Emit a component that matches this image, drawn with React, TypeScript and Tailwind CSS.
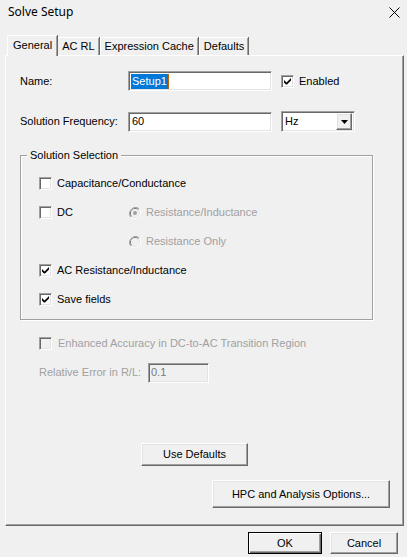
import React from "react";

const sunken =
  "border border-t-[#a0a0a0] border-l-[#a0a0a0] border-b-white border-r-white shadow-[inset_1px_1px_0_#696969,inset_-1px_-1px_0_#e3e3e3]";
const raised =
  "border border-t-white border-l-white border-b-[#696969] border-r-[#696969] shadow-[inset_-1px_-1px_0_#a0a0a0,inset_1px_1px_0_#e3e3e3]";

function Check({ checked, disabled }: { checked?: boolean; disabled?: boolean }) {
  return (
    <div
      className={`w-[13px] h-[13px] shrink-0 flex items-center justify-center ${sunken} ${
        disabled ? "bg-[#f0f0f0]" : "bg-white"
      }`}
    >
      {checked && (
        <svg width="7" height="7" viewBox="0 0 7 7">
          <path d="M0 2 L0 4.5 L2 6.5 L3 6.5 L7 2.5 L7 0 L2.5 4.5 Z" fill={disabled ? "#a0a0a0" : "#000"} />
        </svg>
      )}
    </div>
  );
}

function Radio({ on }: { on?: boolean }) {
  return (
    <svg width="12" height="12" viewBox="0 0 12 12" className="shrink-0">
      <path d="M10.2 1.8 A6 6 0 0 0 1.8 10.2" stroke="#a0a0a0" strokeWidth="1" fill="none" />
      <path d="M1.8 10.2 A6 6 0 0 0 10.2 1.8" stroke="#ffffff" strokeWidth="1" fill="none" />
      <path d="M9.5 2.5 A5 5 0 0 0 2.5 9.5" stroke="#696969" strokeWidth="1" fill="none" />
      <path d="M2.5 9.5 A5 5 0 0 0 9.5 2.5" stroke="#e3e3e3" strokeWidth="1" fill="none" />
      <circle cx="6" cy="6" r="4" fill="#f0f0f0" />
      {on && <circle cx="6" cy="6" r="2" fill="#a0a0a0" />}
    </svg>
  );
}

function Tab({ label, selected }: { label: string; selected?: boolean }) {
  return (
    <div
      className={`flex items-center bg-[#f0f0f0] border-t border-l border-t-white border-l-white shadow-[inset_-1px_0_0_#a0a0a0,1px_0_0_#696969] ${
        selected ? "h-[21px] px-[5px] relative z-10 -mb-px" : "h-[18px] px-[4px] mr-px"
      }`}
    >
      <span className={selected ? "-mt-[2px]" : ""}>{label}</span>
    </div>
  );
}

export default function App() {
  return (
    <div
      className="w-[407px] h-[557px] bg-[#f0f0f0] text-black text-[11px] leading-[13px] flex flex-col overflow-hidden whitespace-nowrap"
      style={{ fontFamily: '"Liberation Sans", Arial, sans-serif' }}
    >
      {/* Title bar */}
      <div className="h-[30px] flex items-start justify-between pl-[8px] pr-[6px] pt-[4px]">
        <span className="text-[12px] leading-[16px]" style={{ fontFamily: '"Noto Sans", sans-serif' }}>
          Solve Setup
        </span>
        <svg width="11" height="11" viewBox="0 0 11 11" className="mt-[3px] mr-[1px]">
          <path d="M0.5 0.5 L10.5 10.5 M10.5 0.5 L0.5 10.5" stroke="#000" strokeWidth="1" />
        </svg>
      </div>

      {/* Tabs */}
      <div className="mt-[4px] pl-[7px] flex items-end h-[21px]">
        <Tab label="General" selected />
        <Tab label="AC RL" />
        <Tab label="Expression Cache" />
        <Tab label="Defaults" />
      </div>

      {/* Panel */}
      <div className="ml-[5px] w-[399px] h-[471px] border-t border-l border-t-white border-l-white border-b border-r border-b-[#696969] border-r-[#696969] shadow-[inset_-1px_-1px_0_#a0a0a0] pl-[14px] pt-[15px] flex flex-col">
        {/* Name row */}
        <div className="flex items-center h-[20px]">
          <span className="w-[108px] shrink-0">Name:</span>
          <div className={`w-[144px] h-[20px] shrink-0 bg-white flex items-center pl-[2px] ${sunken}`}>
            <span className="bg-[#0078d7] text-white px-px h-[15px] leading-[15px]">Setup1</span>
            <span className="w-px h-[15px] bg-[#c06000]" />
          </div>
          <div className="ml-[9px] flex items-center">
            <Check checked />
            <span className="ml-[5px]">Enabled</span>
          </div>
        </div>

        {/* Frequency row */}
        <div className="flex items-center h-[21px] mt-[20px]">
          <span className="w-[108px] shrink-0">Solution Frequency:</span>
          <div className={`w-[144px] h-[20px] shrink-0 bg-white flex items-center pl-[3px] ${sunken}`}>60</div>
          <div className={`ml-[9px] w-[74px] h-[21px] shrink-0 bg-white flex items-center justify-between pl-[3px] pr-[2px] ${sunken}`}>
            <span>Hz</span>
            <div className={`w-[16px] h-[17px] bg-[#f0f0f0] flex items-center justify-center ${raised}`}>
              <svg width="7" height="4" viewBox="0 0 7 4">
                <path d="M0 0 L7 0 L3.5 4 Z" fill="#000" />
              </svg>
            </div>
          </div>
        </div>

        {/* Group box */}
        <div className="relative mt-[23px] w-[353px] h-[165px] border border-[#a0a0a0] shadow-[inset_1px_1px_0_#fff,1px_1px_0_#fff] pl-[18px] pt-[13px] flex flex-col">
          <span className="absolute -top-[7px] left-[6px] px-[3px] bg-[#f0f0f0]">Solution Selection</span>
          <div className="h-[29px] flex items-center">
            <Check />
            <span className="ml-[5px]">Capacitance/Conductance</span>
          </div>
          <div className="h-[29px] flex items-center">
            <div className="w-[90px] shrink-0 flex items-center">
              <Check />
              <span className="ml-[5px]">DC</span>
            </div>
            <Radio on />
            <span className="ml-[5px] text-[#a0a0a0]">Resistance/Inductance</span>
          </div>
          <div className="h-[29px] flex items-center pl-[90px]">
            <Radio />
            <span className="ml-[5px] text-[#a0a0a0]">Resistance Only</span>
          </div>
          <div className="h-[29px] flex items-center">
            <Check checked />
            <span className="ml-[5px]">AC Resistance/Inductance</span>
          </div>
          <div className="h-[29px] flex items-center">
            <Check checked />
            <span className="ml-[5px]">Save fields</span>
          </div>
        </div>

        {/* Enhanced accuracy */}
        <div className="mt-[9px] pl-[19px] h-[29px] flex items-center">
          <Check disabled />
          <span className="ml-[6px] text-[#a0a0a0]">Enhanced Accuracy in DC-to-AC Transition Region</span>
        </div>
        <div className="pl-[19px] h-[29px] grid grid-cols-[109px_61px] items-center">
          <span className="text-[#a0a0a0]">Relative Error in R/L:</span>
          <div className={`h-[20px] bg-[#f0f0f0] flex items-center pl-[2px] text-[#7a7a7a] ${sunken}`}>
            0.1
          </div>
        </div>

        {/* Use defaults */}
        <div className="mt-[56px] ml-[121px]">
          <button className={`w-[107px] h-[23px] bg-[#f0f0f0] flex items-center justify-center ${raised}`}>
            Use Defaults
          </button>
        </div>
        <div className="mt-[14px] ml-[192px]">
          <button className={`w-[178px] h-[28px] bg-[#f0f0f0] flex items-center justify-center ${raised}`}>
            HPC and Analysis Options...
          </button>
        </div>
      </div>

      {/* Bottom buttons */}
      <div className="mt-[6px] flex justify-end pr-[9px] gap-[8px]">
        <button className="w-[74px] h-[22px] bg-[#f0f0f0] border border-black shadow-[inset_1px_1px_0_#fff,inset_-1px_-1px_0_#696969,inset_-2px_-2px_0_#a0a0a0] flex items-center justify-center">
          OK
        </button>
        <button className={`w-[68px] h-[22px] bg-[#f0f0f0] flex items-center justify-center ${raised}`}>
          Cancel
        </button>
      </div>
    </div>
  );
}
